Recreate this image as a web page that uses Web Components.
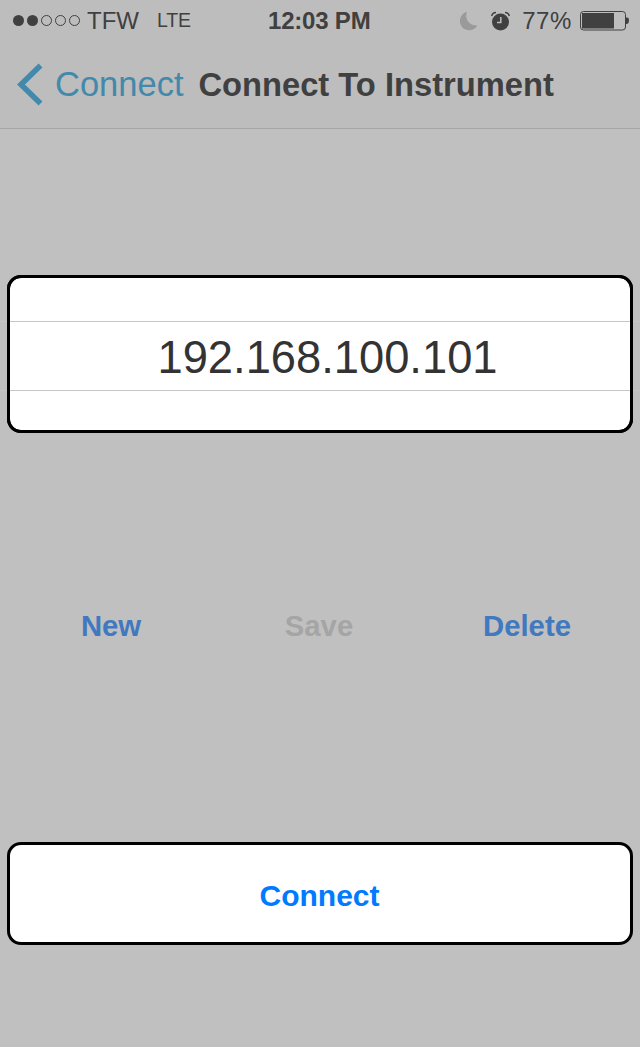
<!DOCTYPE html>
<html><head><meta charset="utf-8"><style>
html,body{margin:0;padding:0;background:#c0c0c0;}
body{width:640px;height:1047px;overflow:hidden;font-family:"Liberation Sans",Arial,sans-serif;}
</style></head><body>
<app-screen>
  <status-bar></status-bar>
  <nav-bar back="Connect" title="Connect To Instrument"></nav-bar>
  <ip-picker value="192.168.100.101"></ip-picker>
  <action-row></action-row>
  <connect-button>Connect</connect-button>
</app-screen>
<script>
function def(name,html){
  customElements.define(name,class extends HTMLElement{
    connectedCallback(){
      if(this.shadowRoot)return;
      const r=this.attachShadow({mode:'open'});
      r.innerHTML=typeof html==='function'?html(this):html;
    }
  });
}
def('app-screen',`<style>:host{display:flex;flex-direction:column;width:640px;height:1047px}</style><slot></slot>`);
def('status-bar',`<style>
:host{display:flex;align-items:center;height:40px;background:#bdbdbd;color:#404040;font-size:24px;box-sizing:border-box;padding:1px 0 0 13px}
.dots{display:flex;gap:3px;margin-right:7px}
.d{width:11px;height:11px;border-radius:50%;background:#404040;box-sizing:border-box}
.d.o{background:none;border:1px solid #404040}
.c{letter-spacing:0}
.l{margin-left:18px;font-size:19.500px;letter-spacing:-.1px}
.t{flex:0 0 auto;margin-left:77px;font-weight:700;font-size:24px;letter-spacing:-.2px;width:106px;white-space:nowrap}
.r{display:flex;align-items:center;margin-left:auto;padding-right:11px}
svg{display:block}
.p{margin:0 8px 0 12px;letter-spacing:.6px}
</style>
<div class="dots"><i class="d"></i><i class="d"></i><i class="d o"></i><i class="d o"></i><i class="d o"></i></div>
<span class="c">TFW</span><span class="l">LTE</span><span class="t">12:03 PM</span>
<div class="r">
<svg width="19" height="20" viewBox="0 0 19 20" style="margin-right:13px"><path d="M8 .8A9.400 9.400 0 1 0 18.500 14.500 A10 10 0 0 1 8 .8Z" fill="#9a9a9a"/></svg>
<svg width="19" height="20" viewBox="0 0 19 20"><circle cx="9.500" cy="11" r="8.500" fill="#404040"/><path d="M9.800 6v5.500H6" fill="none" stroke="#bdbdbd" stroke-width="1.500"/><path d="M.7 5Q1.500 1.500 5 1.500M18.300 5Q17.500 1.500 14 1.500" fill="none" stroke="#404040" stroke-width="1.600"/></svg>
<span class="p">77%</span>
<svg width="49" height="20" viewBox="0 0 49 20"><rect x=".5" y=".5" width="45" height="18.500" rx="3" fill="none" stroke="#404040"/><rect x="2" y="2" width="32" height="15.500" fill="#404040"/><path d="M46 6.500h1q2 0 2 3t-2 3.500h-1z" fill="#404040"/></svg>
</div>`);
def('nav-bar',h=>`<style>
:host{display:flex;align-items:center;height:88px;background:#bdbdbd;border-bottom:1px solid #a5a5a5;padding-left:17px;white-space:nowrap}
svg{display:block;margin-right:12px}
.b{color:#4289ab;font-size:34.500px;margin-right:15px}
.t{color:#404040;font-size:32.700px;font-weight:700;padding-top:2px}
</style>
<svg width="26" height="43" viewBox="0 0 26 43"><path d="M23.500 2.500 4 21.500l19.500 19" fill="none" stroke="#4289ab" stroke-width="5.500"/></svg>
<span class="b">${h.getAttribute('back')}</span><span class="t">${h.getAttribute('title')}</span>`);
def('ip-picker',h=>`<style>
:host{display:block;position:relative;margin:146px 7px 0;height:158px;box-sizing:border-box;background:#fff;border:3px solid #000;border-radius:14px}
.v{position:absolute;left:15px;right:0;top:45px;height:69px;display:flex;align-items:center;justify-content:center;font-size:45.300px;color:#333}
.ln{position:absolute;left:-10px;right:-10px;height:1px;background:#c6c6c6}
.bd{position:absolute;inset:-3px;border:3px solid #000;border-radius:14px;pointer-events:none}
.a{top:43px}.b{top:112px}
</style><div class="ln a"></div><div class="ln b"></div><div class="bd"></div><div class="v">${h.getAttribute('value')}</div>`);
def('action-row',`<style>
:host{display:grid;grid-template-columns:repeat(3,1fr);padding:0 9px 0 7px;margin-top:175px;height:36px;align-items:center;text-align:center;font-size:29.300px;font-weight:700;color:#4079bf}
.s{color:#a5a5a5}
</style><span>New</span><span class="s">Save</span><span>Delete</span>`);
def('connect-button',`<style>
:host{display:flex;align-items:center;justify-content:center;margin:198px 7px 0;height:103px;box-sizing:border-box;padding:4px 1px 0 0;background:#fff;border:3px solid #000;border-radius:14px;color:#007aff;font-size:30px;font-weight:700}
</style><slot></slot>`);
</script>
</body></html>
